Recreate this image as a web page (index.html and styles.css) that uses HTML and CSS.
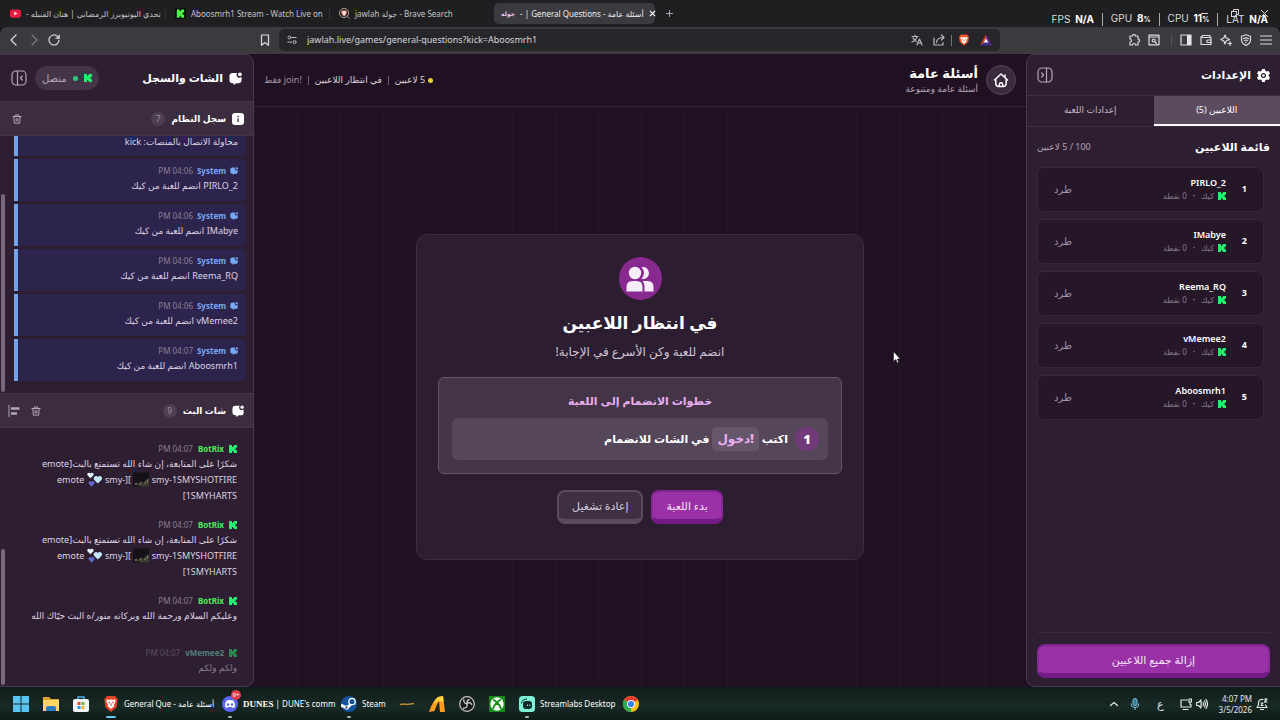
FILE: index.html
```html
<!DOCTYPE html>
<html lang="ar" dir="rtl">
<head>
<meta charset="utf-8">
<title>General Questions - أسئلة عامة</title>
<link rel="stylesheet" href="styles.css">
</head>
<body>
<svg class="defs" aria-hidden="true">
  <symbol id="kick" viewBox="0 0 10 10"><path fill="currentColor" d="M0 0h3.800v2.500h1.200V1.200h1.200V0H10v3.300H8.800v1.200H7.600v1h1.200v1.200H10V10H6.200V8.800H5V7.500H3.800V10H0z"/></symbol>
  <symbol id="chat" viewBox="0 0 14 14"><path fill="currentColor" d="M4 1h5a2.800 2.800 0 0 0 4.500 4v4a3 3 0 0 1-3 3H8l-3 2v-2H4a3.500 3.500 0 0 1-3.500-3.500V4.500A3.500 3.500 0 0 1 4 1z"/><circle fill="currentColor" cx="11.800" cy="2.500" r="2"/></symbol>
  <symbol id="trash" viewBox="0 0 12 12"><path fill="none" stroke="currentColor" stroke-width="1.200" stroke-linecap="round" stroke-linejoin="round" d="M1 3h10M4 3V1.200h4V3M2.200 3l.6 8h6.400l.6-8M5 5.500v3M7 5.500v3"/></symbol>
  <symbol id="panel" viewBox="0 0 16 16"><g fill="none" stroke="currentColor" stroke-width="1.200" stroke-linecap="round" stroke-linejoin="round"><rect x="1" y="1" width="14" height="14" rx="4"/><path d="M6.500 1v14M11.300 6L9.500 8l1.800 2"/></g></symbol>
  <symbol id="shot" viewBox="0 0 16 14"><path fill="#151217" d="M0 0h16v14H0z"/><path fill="#3c3b30" d="M1 11l3-1 2 1 1-2 4 1 2-3 3-1v8H8l-2-1-5-1z"/><path fill="#8a866a" d="M2 11h2v1H2zM7 10h1v2H7zM11 10h2v1h-2zM14 7h1v3h-1z"/></symbol>
  <symbol id="hearts" viewBox="0 0 14 13"><path fill="#e9f5ff" d="M3 5.500L.6 3A1.500 1.500 0 0 1 3 1.200 1.500 1.500 0 0 1 5.400 3z"/><path fill="#c4e9fb" d="M9.500 10L6.200 6.700A2 2 0 0 1 9.500 4.300a2 2 0 0 1 3.300 2.400z"/><path fill="#6068c8" d="M4 12.800L1.600 10.300A1.500 1.500 0 0 1 4 8.500a1.500 1.500 0 0 1 2.400 1.800z"/></symbol>
</svg>

<header class="tabbar" dir="ltr">
  <div class="tab first"><svg class="i11" viewBox="0 0 12 12"><rect y="1.500" width="12" height="9" rx="2.500" fill="#ee1b40"/><path d="M4.700 4l3.400 2-3.400 2z" fill="#fff"/></svg><span class="tabname">- <bdi>تحدي اليوتيوبرز الرمضاني | هتان القنبله</bdi></span></div>
  <div class="tab"><svg class="i11" viewBox="0 0 12 12"><rect width="12" height="12" fill="#071207"/><path fill="#4cf84b" d="M2 1.500h3v2h1v-1h1v-1h3v3H9v1H8v1h1v1h1v3H7v-1H6v-1H5v2H2z"/></svg><span class="tabname">Aboosmrh1 Stream - Watch Live on</span></div>
  <div class="tab wide"><svg class="i11" viewBox="0 0 12 12"><circle cx="5.500" cy="5.500" r="5" fill="none" stroke="#b5a7a6"/><path d="M9 9l2.500 2.500" stroke="#b5a7a6"/><path d="M3.500 3h4.200l.8 1.200-1.200 3.500-1.700 1.300-1.800-1.300L2.600 4.200z" fill="#f4ece8" stroke="#e0513c"/></svg><span class="tabname">jawlah <bdi>جولة</bdi> - Brave Search</span></div>
  <div class="tab active"><b class="favtext">جوله</b><span class="tabname">- | General Questions - <bdi>أسئلة عامة</bdi></span><button class="plain" aria-label="Close tab"><svg class="i7" viewBox="0 0 8 8"><path d="M1 1l6 6M7 1L1 7" stroke="#fff" stroke-width="1.500"/></svg></button></div>
  <button class="plain newtab" aria-label="New tab"><svg class="i7" viewBox="0 0 8 8"><path d="M4 0v8M0 4h8" stroke="#b9b9bd"/></svg></button>
  <div class="wincontrols"><svg viewBox="0 0 68 12" width="68" height="12" fill="none" stroke="#d5d5d8"><path d="M0 5.500h7M60 2l7 7M67 2l-7 7"/><rect x="30.500" y="3.500" width="5" height="5"/><path d="M32.500 3.500v-2h5v5h-2"/></svg></div>
  <div class="stats"><span>FPS <b>N/A</b></span><i></i><span>GPU <b>8<small>%</small></b></span><i></i><span>CPU <b>11<small>%</small></b></span><i></i><span>LAT <b>N/A</b></span></div>
</header>

<nav class="toolbar" dir="ltr">
  <div class="navbtns">
    <button class="plain" aria-label="Back"><svg class="i12" viewBox="0 0 12 12"><path d="M8 1L3 6l5 5" class="ln"/></svg></button>
    <button class="plain dim" aria-label="Forward"><svg class="i12" viewBox="0 0 12 12"><path d="M4 1l5 5-5 5" class="ln"/></svg></button>
    <button class="plain" aria-label="Reload"><svg class="i12" viewBox="0 0 12 12"><path d="M11 6A5 5 0 1 1 9.500 2.400L11 4M11.200 1v3.200H8" class="ln"/></svg></button>
  </div>
  <button class="plain mark" aria-label="Bookmark"><svg class="i12" viewBox="0 0 12 12"><path d="M2.500 1h7v10.300L6 8.500l-3.500 2.800z" class="ln"/></svg></button>
  <div class="urlbar">
    <svg class="i10" viewBox="0 0 12 12"><g class="ln"><circle cx="3" cy="3" r="1.800"/><path d="M6.500 3H11M1 8.500h4.500"/><circle cx="9" cy="8.500" r="1.800"/></g></svg>
    <input class="url" type="text" aria-label="Address" value="jawlah.live/games/general-questions?kick=Aboosmrh1">
    <svg class="i12" viewBox="0 0 12 12"><path class="ln" d="M1 2.500h6M4 1v1.500M6 2.500C5.500 5 4 6.500 1 8M2 4c1 2 2 3 3.500 3.500M6 11l2.500-6L11 11M7 9h3"/></svg>
    <svg class="i12" viewBox="0 0 12 12"><path class="ln" d="M1 4v7h9V8.500M3.500 8.500C3.500 5 6 3.500 11 3.500M8.500 1L11 3.500 8.500 6"/></svg>
    <span class="vbar"></span>
    <svg class="i12" viewBox="0 0 12 12"><path fill="#e8562a" d="M3 .5h6L11 3l-.8 5L6 11.700 1.800 8 1 3z"/><path fill="#fff" d="M2.800 3l2 .4L6 3l1.200.4 2-.4.200 1.500-1.200 2 .3 1L6 10 3.500 7.500l.3-1-1.200-2z"/><path d="M4 5l1.200.5M8 5l-1.200.5M6 6v2" stroke="#e8562a" stroke-width=".8"/></svg>
    <svg class="i12 bat" viewBox="0 0 12 12"><path fill="#d8402b" d="M6 .5L0 11.500 6 7.500z"/><path fill="#6c2d9c" d="M6 .5l6 11L6 8z"/><path fill="#3b2d8d" d="M0 11.500h12L6 7.500z"/><path fill="#fff" d="M6 4.500L3.800 8.500h4.400z"/></svg>
  </div>
  <div class="ext">
    <svg class="i12" viewBox="0 0 12 12"><path class="ln" d="M2 2h2.500a1.500 1.500 0 0 1 3 0H10v3a1.500 1.500 0 0 1 0 3v3H7.500a1.500 1.500 0 0 0-3 0H2V8a1.500 1.500 0 0 0 0-3z"/></svg>
    <svg class="i12" viewBox="0 0 12 12"><g class="ln"><path d="M1 1.200h10v9.600H1zM1 3h10"/><circle cx="5.700" cy="6.500" r="1.500"/><path d="M7 8l1.500 1.300"/></g></svg>
    <span class="vbar faint"></span>
    <svg class="i12" viewBox="0 0 12 12"><path class="ln" d="M1 1h10v10H1z"/><path fill="#e6e6e8" d="M7 1h4v10H7z"/></svg>
    <svg class="i12" viewBox="0 0 12 12"><g class="ln"><path d="M10 3.500V1.500H2.500a1.500 1.500 0 0 0 0 2H11v7H1V2.500"/><path d="M11 6H8a1 1 0 0 0 0 2.500h3"/></g></svg>
    <svg class="i12" viewBox="0 0 12 12"><path class="ln" d="M5 1l1.200 3L9.500 5.500 6.200 7 5 10 3.800 7 .8 5.500 3.800 4zM10 7.500v4M8 9.500h4"/></svg>
    <svg class="i12" viewBox="0 0 12 12"><path class="ln" d="M6 .8l4.500 1.500V6c0 2.500-1.500 4-4.500 5.500C3 10 1.500 8.500 1.500 6V2.300zM3.500 4.700q2.500-1.800 5 0M4.500 6.500q1.500-1 3 0M6 8v.5"/></svg>
    <svg class="i12" viewBox="0 0 12 12"><path class="ln" d="M.5 2h11M.5 6h11M.5 10h11"/></svg>
  </div>
</nav>

<div class="app">
  <aside class="side settings">
    <div class="settings-head"><h2><svg class="i13" viewBox="0 0 14 14"><path fill="#fff" fill-rule="evenodd" d="M5.500 0h3l.5 2 1.500.8 2-.6L14 4.800l-1.400 1.500v1.400L14 9.200l-1.500 2.600-2-.6L9 12l-.5 2h-3L5 12l-1.500-.8-2 .6L0 9.200l1.400-1.500V6.300L0 4.800l1.500-2.600 2 .6L5 2zM7 4.300a2.700 2.700 0 1 0 0 5.400 2.700 2.700 0 0 0 0-5.400z"/><circle cx="7" cy="7" r="1.300" fill="#fff"/></svg>الإعدادات</h2>
      <button class="plain soft" aria-label="طي الإعدادات"><svg class="i16 flip" viewBox="0 0 16 16"><use href="#panel"/></svg></button></div>
    <div class="switch"><button class="on">اللاعبين (5)</button><button>إعدادات اللعبة</button></div>
    <div class="listhead"><h3>قائمة اللاعبين</h3><span>100 / 5 لاعبين</span></div>
    <ol class="players">
      <li><b class="num">1</b><div class="who"><strong>PIRLO_2</strong><p><svg class="i8 k"><use href="#kick"/></svg>كيك<i>•</i>0 نقطة</p></div><button class="plain expel">طرد</button></li>
      <li><b class="num">2</b><div class="who"><strong>IMabye</strong><p><svg class="i8 k"><use href="#kick"/></svg>كيك<i>•</i>0 نقطة</p></div><button class="plain expel">طرد</button></li>
      <li><b class="num">3</b><div class="who"><strong>Reema_RQ</strong><p><svg class="i8 k"><use href="#kick"/></svg>كيك<i>•</i>0 نقطة</p></div><button class="plain expel">طرد</button></li>
      <li><b class="num">4</b><div class="who"><strong>vMemee2</strong><p><svg class="i8 k"><use href="#kick"/></svg>كيك<i>•</i>0 نقطة</p></div><button class="plain expel">طرد</button></li>
      <li><b class="num">5</b><div class="who"><strong>Aboosmrh1</strong><p><svg class="i8 k"><use href="#kick"/></svg>كيك<i>•</i>0 نقطة</p></div><button class="plain expel">طرد</button></li>
    </ol>
    <div class="foot"><button class="btn primary full">إزالة جميع اللاعبين</button></div>
  </aside>

  <main class="stage">
    <div class="stage-head">
      <div class="brand"><button class="home" aria-label="الرئيسية"><svg class="i16" viewBox="0 0 16 16"><g fill="none" stroke="#fff" stroke-width="1.500" stroke-linecap="round" stroke-linejoin="round"><path d="M1.500 8L8 2l6.500 6M2.800 7v4.500a3 3 0 0 0 3 3h4.400a3 3 0 0 0 3-3V7M12 3v2"/><path d="M6.300 14v-1.500a1.700 1.700 0 0 1 3.400 0V14"/></g></svg></button>
        <div><h1>أسئلة عامة</h1><p>أسئلة عامة ومتنوعة</p></div></div>
      <div class="status"><span class="dot"></span><span>5 لاعبين</span><i></i><span>في انتظار اللاعبين</span><i></i><span class="muted"><bdi dir="ltr">join!</bdi> فقط</span></div>
    </div>
    <div class="board">
      <section class="card">
        <div class="badge"><svg viewBox="0 0 28 26" width="28" height="26" fill="#f5edf8"><path d="M15.500 1.200a6 6 0 1 1 0 11.600 8 8 0 0 0 0-11.600zM18.500 25.500V21q0-3.500-1.800-6H21.500q6 0 6 6v4.500z"/><circle cx="9" cy="7" r="6.200"/><path d="M.5 25.500V21q0-6 6-6h4q6 0 6 6v4.500z"/></svg></div>
        <h2>في انتظار اللاعبين</h2>
        <p class="lead">انضم للعبة وكن الأسرع في الإجابة!</p>
        <div class="steps"><h3>خطوات الانضمام إلى اللعبة</h3>
          <div class="step"><b class="one">1</b><span>اكتب</span><b class="cmd">!دخول</b><span>في الشات للانضمام</span></div></div>
        <div class="actions"><button class="btn primary">بدء اللعبة</button><button class="btn ghost">إعادة تشغيل</button></div>
      </section>
    </div>
  </main>

  <aside class="side chat">
    <div class="chat-head"><h2><svg class="i13"><use href="#chat"/></svg>الشات والسجل</h2>
      <div class="right"><span class="pill"><svg class="i8 k"><use href="#kick"/></svg><span class="live"></span>متصل</span><button class="plain soft" aria-label="طي الشات"><svg class="i16" viewBox="0 0 16 16"><use href="#panel"/></svg></button></div></div>
    <div class="bar"><h3><svg class="i12" viewBox="0 0 12 12"><rect width="12" height="12" rx="3" fill="#fff"/><path d="M6 5.500V9M6 2.800v1.400" stroke="#47364c" stroke-width="1.400"/></svg>سجل النظام</h3><span class="count">7</span><button class="plain soft push" aria-label="مسح السجل"><svg class="i10"><use href="#trash"/></svg></button></div>
    <div class="log">
      <article class="partial"><p>محاولة الاتصال بالمنصات: kick</p></article>
      <article><div class="meta"><svg class="i8"><use href="#chat"/></svg><b>System</b><time dir="ltr">PM 04:06</time></div><p>PIRLO_2 انضم للعبة من كيك</p></article>
      <article><div class="meta"><svg class="i8"><use href="#chat"/></svg><b>System</b><time dir="ltr">PM 04:06</time></div><p>IMabye انضم للعبة من كيك</p></article>
      <article><div class="meta"><svg class="i8"><use href="#chat"/></svg><b>System</b><time dir="ltr">PM 04:06</time></div><p>Reema_RQ انضم للعبة من كيك</p></article>
      <article><div class="meta"><svg class="i8"><use href="#chat"/></svg><b>System</b><time dir="ltr">PM 04:06</time></div><p>vMemee2 انضم للعبة من كيك</p></article>
      <article><div class="meta"><svg class="i8"><use href="#chat"/></svg><b>System</b><time dir="ltr">PM 04:07</time></div><p>Aboosmrh1 انضم للعبة من كيك</p></article>
      <span class="thumb"></span>
    </div>
    <div class="bar two"><h3><svg class="i12"><use href="#chat"/></svg>شات البث</h3><span class="count">9</span><button class="plain soft push" aria-label="مسح الشات"><svg class="i10"><use href="#trash"/></svg></button><button class="plain soft" aria-label="محاذاة"><svg class="i12" viewBox="0 0 12 12"><path d="M1 0v12" stroke="currentColor"/><path d="M3 3.500h8.500M3 8.500h6" stroke="currentColor" stroke-width="2.500"/></svg></button></div>
    <div class="msgs">
      <article><div class="meta"><svg class="i8 k"><use href="#kick"/></svg><b>BotRix</b><time dir="ltr">PM 04:07</time></div>
        <p dir="ltr">emote]<bdi>شكرًا على المتابعة، إن شاء الله تستمتع بالبث</bdi></p><p dir="ltr">emote <svg class="emo hearts"><use href="#hearts"/></svg> smy-][ <svg class="emo"><use href="#shot"/></svg> smy-1SMYSHOTFIRE</p><p dir="ltr">[1SMYHARTS</p></article>
      <article><div class="meta"><svg class="i8 k"><use href="#kick"/></svg><b>BotRix</b><time dir="ltr">PM 04:07</time></div>
        <p dir="ltr">emote]<bdi>شكرًا على المتابعة، إن شاء الله تستمتع بالبث</bdi></p><p dir="ltr">emote <svg class="emo hearts"><use href="#hearts"/></svg> smy-][ <svg class="emo"><use href="#shot"/></svg> smy-1SMYSHOTFIRE</p><p dir="ltr">[1SMYHARTS</p></article>
      <article><div class="meta"><svg class="i8 k"><use href="#kick"/></svg><b>BotRix</b><time dir="ltr">PM 04:07</time></div><p>وعليكم السلام ورحمة الله وبركاته منور/ه البث حيّاك الله</p></article>
      <article class="entering"><div class="meta"><svg class="i8 k"><use href="#kick"/></svg><b>vMemee2</b><time dir="ltr">PM 04:07</time></div><p>ولكم ولكم</p></article>
      <span class="thumb low"></span>
    </div>
  </aside>
</div>

<footer class="taskbar" dir="ltr">
  <div class="task"><svg class="i16" viewBox="0 0 16 16" fill="#58c4f4"><path d="M0 0h7.500v7.500H0zM8.500 0H16v7.500H8.500zM0 8.500h7.500V16H0zM8.500 8.500H16V16H8.500z"/></svg></div>
  <div class="task"><svg class="i16" viewBox="0 0 16 16"><path fill="#e0a32d" d="M0 1h6l2 2h8v12H0z"/><path fill="#ffd563" d="M0 4h16v11H0z"/><path fill="#2b7cc7" d="M3 15v-3q0-2 2-2h6q2 0 2 2v3z"/></svg></div>
  <div class="task"><svg class="i16" viewBox="0 0 16 16"><path fill="none" stroke="#4bb3e8" stroke-width="1.500" d="M5 4V1h6v3"/><rect y="3" width="16" height="13" rx="2" fill="#f1f3f4"/><path fill="#e64a2e" d="M4.500 6h3v3h-3z"/><path fill="#7ab53a" d="M8.500 6h3v3h-3z"/><path fill="#279be5" d="M4.500 10h3v3h-3z"/><path fill="#f4b928" d="M8.500 10h3v3h-3z"/></svg></div>
  <div class="task open a"><svg class="i16" viewBox="0 0 12 12"><path fill="#e8432a" d="M3 0h6l2 2.500-.8 6L6 12 1.800 8.500 1 2.500z"/><path fill="#fff" d="M3 2.500l1.800.5L6 2.500 7.200 3 9 2.500l.5 1.500-1.300 2.500.3 1L6 9.800 3.500 7.500l.3-1L2.500 4z"/><path d="M4 4.500l1.200.6M8 4.500l-1.200.6M6 5.500v2" stroke="#e8432a" stroke-width=".8"/></svg><span>General Que - <bdi>أسئلة عامة</bdi></span></div>
  <div class="task open b"><svg class="i16" viewBox="0 0 16 16"><circle cx="8" cy="8" r="8" fill="#5865f2"/><path fill="#fff" d="M4.500 4.500Q8 3.300 11.500 4.500 13.500 8 13 11l-2.500 1-.7-1H6.200l-.7 1L3 11q-.5-3 1.500-6.500z"/><g fill="#5865f2"><circle cx="6" cy="8.500" r="1.200"/><circle cx="10" cy="8.500" r="1.200"/></g></svg><em>9+</em><span><b>DUNES</b> | DUNE's comm</span></div>
  <div class="task open c"><svg class="i16" viewBox="0 0 16 16"><circle cx="8" cy="8" r="8" fill="#11529a"/><path d="M0 9l6 3 5-5" stroke="#fff" stroke-width="3" fill="none"/><circle cx="11" cy="5.500" r="3.200" fill="#11529a" stroke="#fff" stroke-width="1.300"/><circle cx="5.500" cy="11.500" r="1.500" fill="#173a64" stroke="#fff"/></svg><span>Steam</span></div>
  <div class="task"><svg class="i16" viewBox="0 0 16 16"><path d="M1 8.500l4-.5 3 .5L15 7.500" stroke="#b38a33" stroke-width="1.500" fill="none"/></svg></div>
  <div class="task"><svg class="i16" viewBox="0 0 16 16"><path fill="#ff9c1c" d="M0 16Q4 4 9 1l5-1 2 16h-5L10 5Q7 10 5.500 15z"/><path fill="#ffd43b" d="M9 1l5-1 .7 6L10 5Q7 6 4.500 8 6.500 3 9 1z"/></svg></div>
  <div class="task"><svg class="i16" viewBox="0 0 16 16"><g fill="none" stroke="#c7c9ca"><circle cx="8" cy="8" r="7.300" stroke-width="1.200" fill="#17191a"/><path d="M8 8Q4 7 5 3M8 8q3-3 5 1M8 8q1 4-4 4.500M8 8Q7.500 4 10.500 3.500" stroke-width="1.300"/></g></svg></div>
  <div class="task"><svg class="i16" viewBox="0 0 16 16"><path fill="#168a17" d="M0 0h16v16H0z"/><circle cx="8" cy="8" r="6.700" fill="#f4f7f4"/><path d="M4 3.500Q7 5 8 7q1-2 4-3.500M4 13q1-4 4-6.500Q11 9 12 13" fill="none" stroke="#168a17" stroke-width="1.700"/></svg></div>
  <div class="task open d"><svg class="i16" viewBox="0 0 16 16"><rect width="16" height="16" rx="3.500" fill="#7df2d2"/><rect x="4" y="5" width="9" height="8" rx="3" fill="#122b2a"/><path d="M2.500 7.500Q3 3 8 3" fill="none" stroke="#122b2a"/><path d="M8.500 8.500V10M10.800 8.500V10" stroke="#7df2d2"/></svg><span>Streamlabs Desktop</span></div>
  <div class="task"><svg class="i16" viewBox="0 0 16 16"><circle cx="8" cy="8" r="8" fill="#fbc116"/><path fill="#e33b2e" d="M8 8L1.100 4A8 8 0 0 1 14.900 4z"/><path fill="#2da94f" d="M8 8L8.200 16A8 8 0 0 1 1.100 4z"/><circle cx="8" cy="8" r="4" fill="#fff"/><circle cx="8" cy="8" r="3.100" fill="#3f80ed"/></svg></div>
  <div class="tray">
    <svg class="i8" viewBox="0 0 8 8"><path d="M.5 5.500L4 2.500l3.500 3" class="ln"/></svg>
    <svg class="i12" viewBox="0 0 12 12" fill="none" stroke="#7cc6de"><rect x="4" y="0.500" width="4" height="7" rx="2" fill="#2c7b97"/><path d="M2 5.500a4 4 0 0 0 8 0M6 9.500V12"/></svg>
    <bdi class="lang">ع</bdi>
    <div class="pair"><svg class="i12" viewBox="0 0 12 12"><path class="ln" d="M7.500 2H1v7h10V6.500M3 11.500h5M9 1h2.500v3H9zM10 4v2.500"/></svg>
    <svg class="i12" viewBox="0 0 12 12"><path class="ln" d="M.5 4.500h2L5 2v8L2.500 7.500h-2zM7 4.500q1 1.500 0 3M8.500 3q2 3 0 6M10 1.500q3 4.500 0 9"/></svg></div>
    <div class="clock">4:07 PM<br>3/5/2026</div>
    <svg class="i12" viewBox="0 0 12 12"><path class="ln" d="M7 1.500Q2.500 1 2.500 5v2L1 9.500h10L9.500 7M4.500 11.500h3M8.500 1h2.500L8.500 4H11M5 5h2L5 7.500h2"/></svg>
  </div>
</footer>
<svg class="cursor" viewBox="0 0 8 13" width="8" height="13"><path d="M.5.5v10l2.300-2 1.500 3.500 1.500-.7-1.500-3.300h3z" fill="#fff" stroke="#111" stroke-width=".6"/></svg>
</body>
</html>
```

FILE: styles.css
```css
* { box-sizing: border-box; }
body, h1, h2, h3, p, ol { margin: 0; padding: 0; }
body {
  display: flex; flex-direction: column; height: 100vh; overflow: hidden; position: relative;
  background: #1f1122; color: #fff;
  font: 10px/16px "Noto Sans", "DejaVu Sans", sans-serif;
}
button, input { font: inherit; color: inherit; }
.plain { background: none; border: 0; padding: 0; display: flex; cursor: pointer; }
.defs { position: absolute; width: 0; height: 0; }
svg { flex: none; }
.i7 { width: 7px; height: 7px; }
.i8 { width: 8px; height: 8px; }
.i10 { width: 10px; height: 10px; }
.i11 { width: 11px; height: 11px; }
.i12 { width: 12px; height: 12px; }
.i13 { width: 13px; height: 13px; }
.i16 { width: 16px; height: 16px; }
.k { color: #22f06c; }
.ln { fill: none; stroke: currentColor; stroke-width: 1.2; stroke-linejoin: round; stroke-linecap: round; }

.tabbar { display: flex; align-items: center; height: 27px; flex: none; background: #1f1f22; position: relative; font-size: 8px; color: #c4c4c8; }
.tab { display: flex; align-items: center; gap: 5px; height: 13px; width: 164px; padding: 0 9px; border-right: 1px solid #303034; white-space: nowrap; }
.tab.first { width: 166px; padding: 0 4px 0 10px; }
.tab.wide { border: 0; }
.tabname { flex: 1; }
.tab.active { height: 21px; width: 161px; background: #3b3a3f; border-radius: 5px; border: 0; padding: 0 7px; color: #eee; }
.favtext { font-size: 6px; color: #f0c9f5; }
.newtab { margin-left: 11px; }
.wincontrols { margin-left: auto; padding-right: 11px; display: flex; }
.stats { position: absolute; right: 12px; top: 10px; display: flex; align-items: center; gap: 8px; font: 10px/16px Inter, sans-serif; color: #ddd; }
.stats b { color: #fff; margin-left: 2px; }
.stats small { font-size: 7px; }
.stats i { width: 1px; height: 13px; background: #aaa; }

.toolbar { display: flex; align-items: center; height: 27px; flex: none; background: #3b3b3f; border-radius: 7px 7px 0 0; color: #dcdce0; padding: 0 8px 1px; gap: 8px; }
.navbtns { display: flex; gap: 8px; flex: 0 0 243px; }
.dim { color: #7b7b80; }
.urlbar { display: flex; align-items: center; gap: 10px; flex: 0 1 721px; height: 22px; border-radius: 5px; background: #26262a; padding: 0 8px; color: #b9b9bd; }
.url { flex: 1; min-width: 0; background: none; border: 0; padding: 0; font-size: 9px; color: #d6d6da; outline: 0; }
.vbar { width: 1px; height: 11px; margin: 0 -4px; background: #77777c; }
.vbar.faint { background: #55555a; margin: 0 0 0 3px; }
.ext { display: flex; align-items: center; gap: 8px; margin-left: auto; }

.app { flex: 1; min-height: 0; display: flex; background: #1f1122; }
.side { display: flex; flex-direction: column; min-height: 0; background: #2d1e31; border: 1px solid #49364c; }
.settings { flex: 0 0 254px; border-right: 0; border-top-left-radius: 9px; border-bottom-left-radius: 9px; }
.chat { flex: 0 0 254px; border-left: 0; border-top-right-radius: 9px; border-bottom-right-radius: 9px; overflow: hidden; }
.soft { color: #b3a6b6; }
.flip { transform: scaleX(-1); }

.settings-head { display: flex; align-items: center; justify-content: space-between; height: 41px; padding: 0 10px; border-bottom: 1px solid #3e2e42; }
.settings-head h2, .chat-head h2 { display: flex; align-items: center; gap: 6px; font-size: 11px; line-height: 16px; }
.switch { display: grid; grid-template-columns: 1fr 1fr; height: 31px; border-bottom: 1px solid #3e2e42; }
.switch button { background: none; border: 0; border-bottom: 2px solid transparent; color: #c4b8c6; font-size: 9px; cursor: pointer; }
.switch .on { background: #5a4b5f; border-color: #fff; color: #fff; }
.listhead { display: flex; align-items: center; justify-content: space-between; padding: 0 10px; height: 40px; }
.listhead h3 { font-size: 11px; }
.listhead span { color: #b3a6b6; font-size: 9px; }
.players { list-style: none; display: flex; flex-direction: column; gap: 7px; padding: 0 16px 0 10px; flex: 1; }
.players li { display: flex; align-items: center; height: 45px; padding: 0 16px 2px; border: 1px solid #38273b; border-radius: 6px; background: #251728; gap: 16px; }
.num { width: 5px; font-size: 9px; }
.who { flex: 1; }
.who strong { font-weight: 600; font-size: 9px; display: block; line-height: 14px; }
.who p { display: flex; align-items: center; gap: 4px; color: #86798a; font-size: 8px; line-height: 12px; }
.who i { font-size: 6px; font-style: normal; padding: 0 2px; }
.expel { color: #a093a4; font-size: 10px; }
.foot { margin: 0 10px; padding: 11px 0 8px; border-top: 1px solid #3a2a3e; }
.btn { height: 34px; border: 2px solid; border-bottom-width: 5px; border-radius: 8px; padding: 0 13px; font-size: 11px; line-height: 16px; cursor: pointer; }
.primary { background: #9a31a6; border-color: #7f2390 #8a2998 #731b84; color: #f6e3f8; }
.ghost { background: #3e2f43; border-color: #5a4a5f; color: #d9cfdb; }
.full { width: 100%; }

.stage { flex: 1; min-width: 0; display: flex; flex-direction: column; }
.stage-head { display: flex; align-items: center; justify-content: space-between; height: 53px; padding: 0 10px; border-bottom: 1px solid #362439; }
.brand { display: flex; align-items: center; gap: 8px; }
.home { width: 30px; height: 30px; padding: 0; border-radius: 50%; border: 1px solid #57425b; background: #3a2a3e; display: grid; place-items: center; }
.brand h1 { font-size: 13px; line-height: 18px; }
.brand p { font-size: 9px; line-height: 14px; color: #b3a6b6; }
.status { display: flex; align-items: center; gap: 6px; font-size: 9px; color: #ddd3df; }
.status i { width: 1px; height: 9px; background: #6d5c70; }
.dot { width: 5px; height: 5px; border-radius: 50%; background: #f0cf35; margin-left: -3px; }
.muted { color: #a093a4; }
.board {
  flex: 1; display: flex; align-items: center; justify-content: center;
  background-image: linear-gradient(90deg, #271629 1px, transparent 1px), linear-gradient(#241426 1px, transparent 1px);
  background-size: 43px 43px;
}
.card { width: 448px; padding: 22px 21px 35px; border: 1px solid #3d2c41; border-radius: 11px; background: #2c1e30; display: flex; flex-direction: column; align-items: center; }
.badge { width: 43px; height: 43px; border-radius: 50%; background: #88298f; display: grid; place-items: center; }
.card h2 { font-size: 17px; line-height: 28px; margin-top: 9px; }
.lead { font-size: 12px; line-height: 18px; margin-top: 6px; color: #d3c7d6; }
.steps { align-self: stretch; margin-top: 16px; padding: 13px; border: 1px solid #64556a; border-radius: 6px; background: #433446; }
.steps h3 { font-size: 11px; line-height: 20px; text-align: center; color: #e8aef0; margin-bottom: 7px; }
.step { display: flex; align-items: center; gap: 7px; height: 42px; padding: 0 9px; border-radius: 6px; background: #55465a; font-size: 11px; font-weight: 600; }
.one { width: 24px; height: 24px; line-height: 24px; text-align: center; border-radius: 50%; background: #713a7b; font-size: 13px; }
.cmd { padding: 4px 5px; margin: 0 -4px; border-radius: 5px; background: #65566a; color: #eeb0f5; font-size: 12px; }
.actions { display: flex; gap: 8px; margin-top: 16px; }

.chat-head { display: flex; align-items: center; justify-content: space-between; height: 46px; padding: 0 11px; }
.right { display: flex; align-items: center; gap: 8px; }
.pill { display: flex; align-items: center; gap: 6px; height: 24px; padding: 0 7px; border-radius: 12px; background: #433447; color: #b3a6b6; }
.live { width: 5px; height: 5px; border-radius: 50%; background: #35c879; }
.bar { display: flex; align-items: center; gap: 6px; height: 35px; flex: none; padding: 0 9px 0 12px; background: #3b2c3f; border-top: 1px solid #463549; border-bottom: 1px solid #463549; }
.bar.two { padding-left: 8px; }
.bar h3 { display: flex; align-items: center; gap: 6px; font-size: 9px; line-height: 16px; }
.count { width: 14px; height: 14px; line-height: 14px; text-align: center; border-radius: 50%; background: #4d3e51; color: #a093a4; font-size: 8px; }
.push { margin-right: auto; }
.bar .push + .plain { margin-right: 5px; }
.log, .msgs { position: relative; display: flex; flex-direction: column; justify-content: flex-end; overflow: hidden; }
.log { flex: 0 0 257px; gap: 3px; padding: 0 7px 12px 14px; }
.log article { flex: none; height: 42px; padding: 4px 8px; border-left: 4px solid #75a2ec; border-radius: 0 5px 5px 0; background: #2d244d; }
.log .partial { height: 20px; padding: 0 8px; border-top-right-radius: 0; }
.partial p { line-height: 12px; }
.meta { display: flex; align-items: center; gap: 5px; line-height: 15px; height: 15px; font-size: 8px; }
.log .meta { color: #78a9f5; gap: 4px; }
.meta time { color: #8a7e94; font-size: 8px; }
article p { font-size: 9px; line-height: 16px; color: #ddd3e1; white-space: nowrap; }
.msgs { flex: 1; min-height: 0; padding: 0 16px 10px 7px; gap: 13px; }
.msgs article { flex: none; }
.msgs p[dir] { text-align: right; height: 16px; }
.msgs .meta b { color: #48ee58; }
.msgs .entering { opacity: .5; margin-top: 8px; }
.entering .meta b { color: #73d6b8; }
.msgs .emo { width: 16px; height: 15px; vertical-align: middle; margin: -2px 0 0; }
.thumb { position: absolute; left: 1px; bottom: 1px; width: 4px; height: 198px; border-radius: 2px; background: #776979; }
.thumb.low { height: 136px; }

.taskbar { display: flex; align-items: center; height: 33px; flex: none; padding: 0 12px 0 13px; gap: 14px; background: linear-gradient(180deg, #101c1a, #182a26 60%, #0e1a18); font-size: 8px; white-space: nowrap; }
.task { display: flex; align-items: center; position: relative; }
.open { height: 28px; gap: 5px; }
.open::after { content: ""; position: absolute; left: 6px; bottom: 0; width: 4px; height: 2px; border-radius: 1px; background: #aab4b2; }
.a::after { left: 3px; width: 10px; background: #63c5f1; }
.a { width: 105px; }
.b { width: 105px; }
.b b { font-family: "Liberation Serif", serif; font-size: 9px; }
.c { width: 44px; }
.d { width: 90px; }
.task em { position: absolute; left: 9px; top: 0; width: 10px; height: 10px; border-radius: 5px; background: #dd3e4a; font: 6px/10px "Noto Sans", sans-serif; text-align: center; }
.tray { margin-left: auto; display: flex; align-items: center; gap: 11px; color: #e3e8e7; }
.lang { font-size: 11px; margin: 0 5px; }
.pair { display: flex; gap: 4px; }
.clock { font-size: 8px; line-height: 11px; text-align: right; margin-right: -7px; }
.cursor { position: absolute; left: 893px; top: 351px; }
```
